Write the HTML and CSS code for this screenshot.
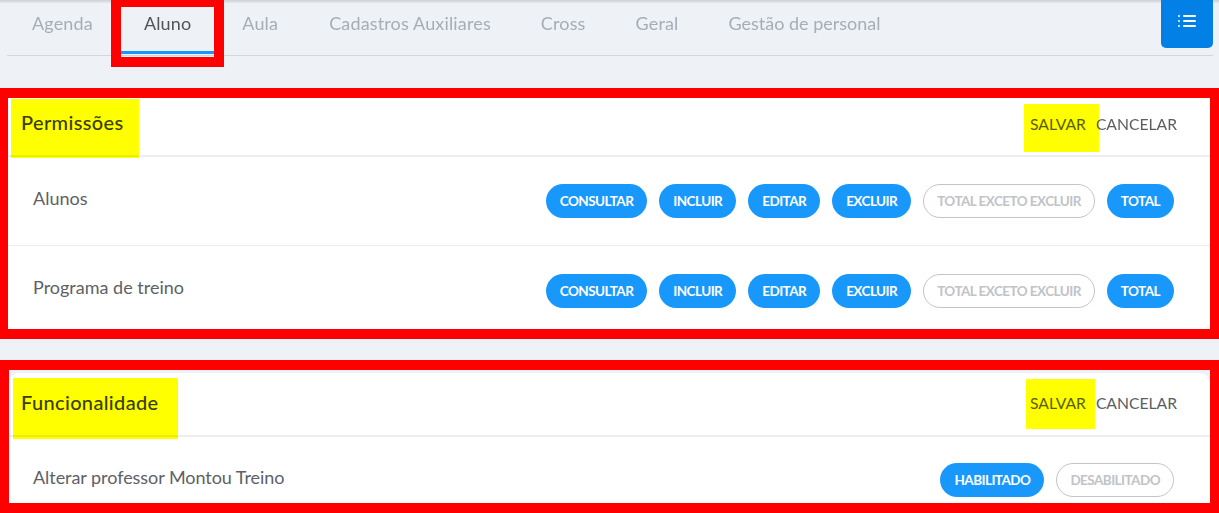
FILE: index.html
```html
<!DOCTYPE html>
<html lang="pt-BR">
<head>
    <meta charset="UTF-8">
    <meta name="viewport" content="width=device-width, initial-scale=1.0">
    <title>Permissões</title>
    <link rel="stylesheet" href="styles.css">
</head>
<body>
    <!-- Tabs -->
    <div class="tabs-bar">
        <nav class="tabs">
            <a class="tab">Agenda</a>
            <a class="tab active">Aluno</a>
            <a class="tab">Aula</a>
            <a class="tab">Cadastros Auxiliares</a>
            <a class="tab">Cross</a>
            <a class="tab">Geral</a>
            <a class="tab last">Gestão de personal</a>
        </nav>
        <button class="menu-btn" type="button" aria-label="Menu">
            <svg width="18" height="14" viewBox="0 0 18 14" fill="#fff">
                <circle cx="1" cy="2" r="1"/>
                <circle cx="1" cy="7" r="1"/>
                <circle cx="1" cy="12" r="1"/>
                <rect x="5" y="1" width="13" height="2" rx="1"/>
                <rect x="5" y="6" width="13" height="2" rx="1"/>
                <rect x="5" y="11" width="13" height="2" rx="1"/>
            </svg>
        </button>
    </div>

    <!-- Permissoes -->
    <section class="card-frame permissions">
        <div class="card">
            <header class="card-header">
                <h2 class="card-title">Permissões</h2>
                <div class="card-actions">
                    <a class="link save">SALVAR</a>
                    <a class="link">CANCELAR</a>
                </div>
            </header>
            <div class="row row-first">
                <span class="row-label">Alunos</span>
                <div class="pills">
                    <span class="pill">CONSULTAR</span>
                    <span class="pill">INCLUIR</span>
                    <span class="pill">EDITAR</span>
                    <span class="pill">EXCLUIR</span>
                    <span class="pill off">TOTAL EXCETO EXCLUIR</span>
                    <span class="pill">TOTAL</span>
                </div>
            </div>
            <div class="row row-second">
                <span class="row-label">Programa de treino</span>
                <div class="pills">
                    <span class="pill">CONSULTAR</span>
                    <span class="pill">INCLUIR</span>
                    <span class="pill">EDITAR</span>
                    <span class="pill">EXCLUIR</span>
                    <span class="pill off">TOTAL EXCETO EXCLUIR</span>
                    <span class="pill">TOTAL</span>
                </div>
            </div>
        </div>
    </section>

    <!-- Funcionalidade -->
    <section class="card-frame features">
        <div class="card">
            <header class="card-header">
                <h2 class="card-title">Funcionalidade</h2>
                <div class="card-actions">
                    <a class="link save">SALVAR</a>
                    <a class="link">CANCELAR</a>
                </div>
            </header>
            <div class="row row-third">
                <span class="row-label">Alterar professor Montou Treino</span>
                <div class="pills">
                    <span class="pill">HABILITADO</span>
                    <span class="pill off">DESABILITADO</span>
                </div>
            </div>
        </div>
    </section>
</body>
</html>
```

FILE: styles.css
```css
body {
    font-family: 'Lato', 'Open Sans', sans-serif;
    margin: 0;
    height: 513px;
    overflow: hidden;
    background: #eef1f6;
    color: #51555a;
}

.tabs-bar {
    display: flex;
    justify-content: space-between;
    height: 55px;
    margin: 0 6px 0 7px;
    border-bottom: 1px solid #d3d5d9;
    position: relative;
}

.tabs-bar::before {
    content: '';
    position: fixed;
    top: 0;
    left: 0;
    right: 0;
    height: 3px;
    background: linear-gradient(#cfd1d6, #e6e8ed);
}

.tabs {
    display: flex;
}

.tab {
    position: relative;
    padding: 13px 25px 0;
    font-size: 18px;
    line-height: 21px;
    letter-spacing: 0.15px;
    color: #a6adb7;
    box-sizing: border-box;
    height: 54px;
}

.tab:nth-child(-n+3) {
    padding-right: 26px;
}

.tab.last {
    letter-spacing: 0;
}

.tab.active {
    color: #51555a;
    border-bottom: 3px solid #1998fc;
}

/* annotation box round the active tab */
.tab.active::after {
    content: '';
    position: absolute;
    left: -8px;
    right: -7px;
    top: 0;
    height: 67px;
    box-sizing: border-box;
    border: 10px solid #ff0000;
    border-top-width: 7px;
}

.menu-btn {
    position: relative;
    width: 52px;
    height: 48px;
    border: none;
    border-radius: 0 0 5px 5px;
    background: #0380e6;
    display: flex;
    align-items: flex-end;
    justify-content: center;
    padding: 0 0 20px;
}

.card-frame {
    box-sizing: border-box;
    border: 10px solid #ff0000;
    border-left-width: 8px;
    border-right-width: 9px;
}

.permissions {
    margin-top: 32px;
    height: 251px;
}

.features {
    margin-top: 21px;
    height: 153px;
    border-left-width: 9px;
    padding-top: 3px;
}

.card {
    background: #fff;
    height: 100%;
}

.features .card {
    border-radius: 10px 10px 0 0;
}

.card-header {
    display: flex;
    justify-content: space-between;
    align-items: center;
    height: 59px;
    padding: 0 33px 9px 13px;
    border-bottom: 2px solid #eceef3;
    box-sizing: border-box;
}

.permissions .card-actions {
    margin-top: 4px;
}

.features .card-header {
    height: 64px;
    padding: 0 33px 4px 12px;
}

.features .card-actions {
    margin-top: 2px;
}

.card-title {
    position: relative;
    margin: 0;
    font-size: 20px;
    line-height: 24px;
    font-weight: 500;
    letter-spacing: 0.35px;
    color: #3a3d40;
}

.card-actions {
    display: flex;
    gap: 10px;
}

.link {
    position: relative;
    font-size: 15.7px;
    line-height: 20px;
    color: #5a5e63;
}

/* yellow marker on the screenshot */
.card-title::before,
.save::before {
    content: '';
    position: absolute;
    background: #ffff00;
    mix-blend-mode: multiply;
}

.permissions .card-title::before {
    left: -10px;
    right: -16px;
    top: -11px;
    bottom: -24px;
}

.permissions .save::before {
    left: -6px;
    right: -13px;
    top: -10px;
    bottom: -18px;
}

.features .card-title::before {
    left: -8px;
    right: -19px;
    top: -12px;
    bottom: -25px;
}

.features .save::before {
    left: -4px;
    right: -9px;
    top: -14px;
    bottom: -16px;
}

.row {
    display: flex;
    justify-content: space-between;
    padding: 0 36px 0 25px;
}

.row-first {
    height: 89px;
    border-bottom: 1px solid #eceef3;
    box-sizing: border-box;
    padding-top: 27px;
}

.row-second {
    padding-top: 28px;
}

.row-third {
    padding: 26px 36px 0 24px;
}

.row-label {
    font-size: 18px;
    line-height: 21px;
    color: #5d6166;
}

.row-first .row-label {
    margin-top: 4px;
}

.row-second .row-label {
    margin-top: 3px;
}

.row-third .row-label {
    margin-top: 4px;
    letter-spacing: -0.05px;
}

.pills {
    display: flex;
    gap: 12px;
}

.pill {
    height: 34px;
    line-height: 34px;
    padding: 0 14px;
    border-radius: 17px;
    background: #1998fc;
    color: #fff;
    font-size: 13.5px;
    font-weight: 700;
    letter-spacing: -0.55px;
    box-sizing: border-box;
    white-space: nowrap;
}

.pill.off {
    background: #fff;
    border: 1px solid #c3c5ca;
    padding: 0 13px;
    line-height: 32px;
    color: #c0c3c8;
}
```
